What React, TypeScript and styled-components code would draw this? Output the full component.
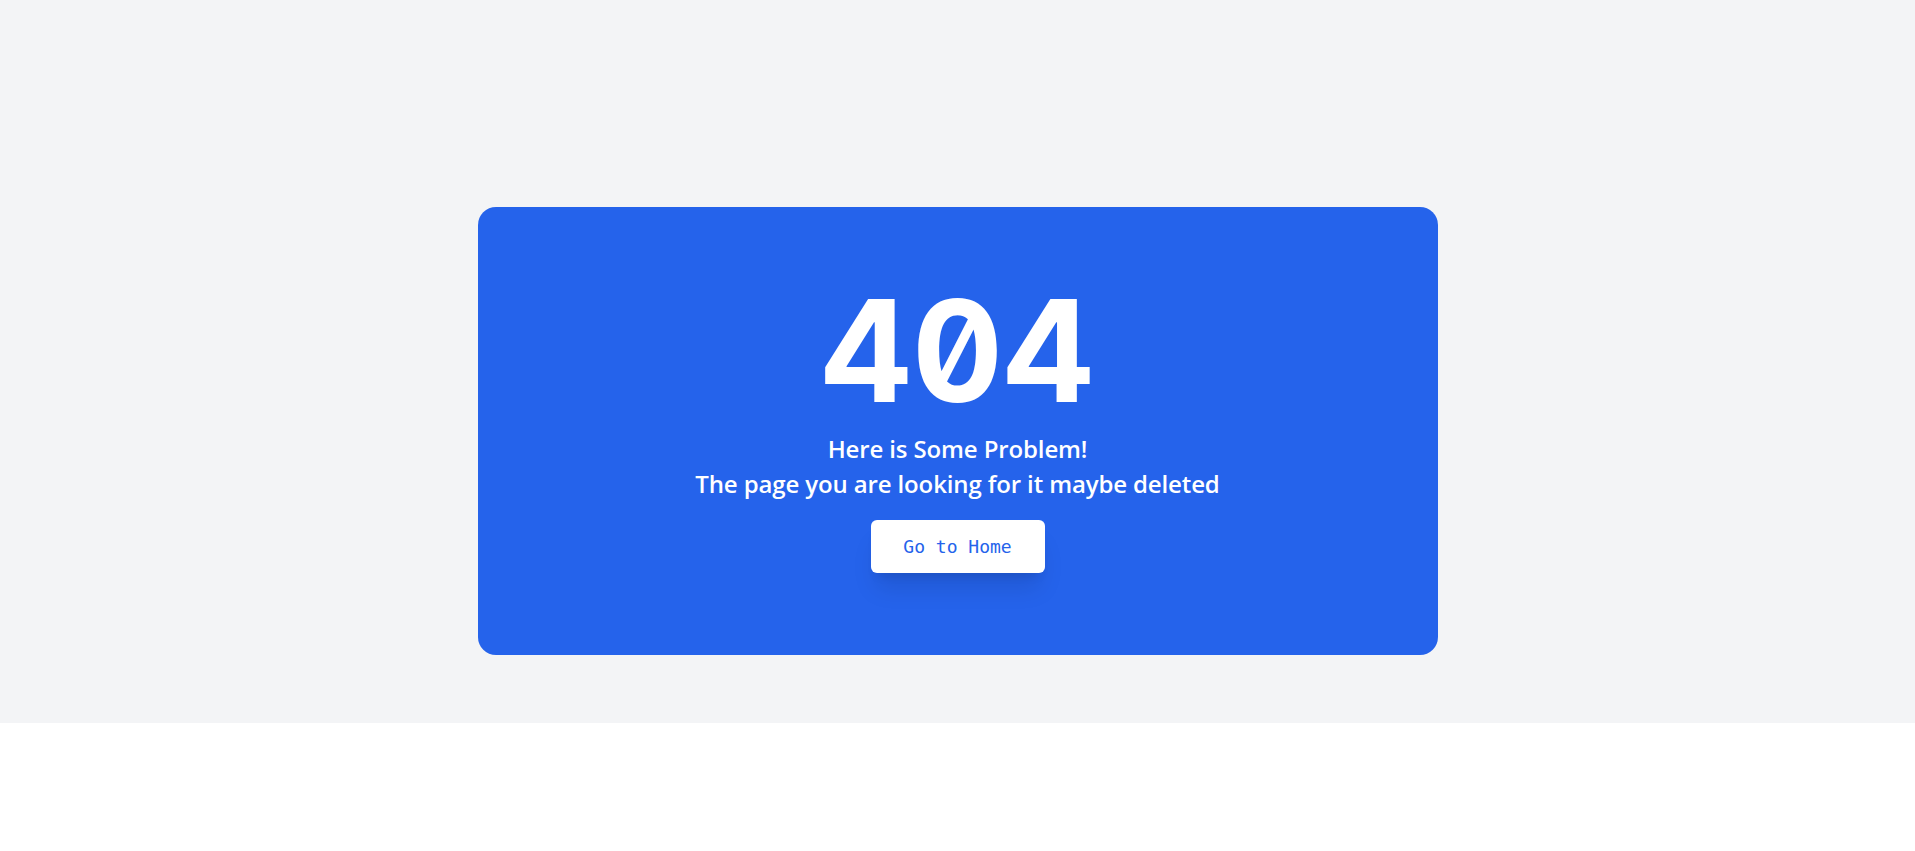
import React from 'react'
import styled, { createGlobalStyle } from 'styled-components'

const GlobalStyle = createGlobalStyle`
  html, body {
    margin: 0;
    padding: 0;
    background: #ffffff;
  }
  * {
    box-sizing: border-box;
  }
`

const Section = styled.section`
  height: 723px;
  background: #f3f4f6;
  padding-top: 207px;
`

const Card = styled.div`
  width: 960px;
  height: 448px;
  margin: 0 auto;
  background: #2563eb;
  border-radius: 18px;
  padding-top: 64px;
  display: flex;
  flex-direction: column;
  align-items: center;
`

const Code = styled.h1`
  margin: 0;
  font-family: Inter, 'DejaVu Sans', sans-serif;
  font-feature-settings: 'zero' 1, 'tnum' 1;
  font-weight: 700;
  font-size: 141px;
  line-height: 160px;
  color: #ffffff;
`

const Message = styled.p`
  margin: 0;
  font-family: 'Open Sans', 'Noto Sans', sans-serif;
  font-weight: 600;
  font-size: 24px;
  line-height: 35px;
  letter-spacing: -0.13px;
  color: #ffffff;
  text-align: center;
`

const HomeButton = styled.a`
  margin-top: 19px;
  width: 174px;
  height: 53px;
  display: flex;
  align-items: center;
  justify-content: center;
  background: #ffffff;
  border-radius: 6px;
  color: #2563eb;
  font-family: 'DejaVu Sans Mono', 'Liberation Mono', monospace;
  font-size: 18px;
  text-decoration: none;
  box-shadow: 0 20px 25px -5px rgba(0, 0, 0, 0.1), 0 8px 10px -6px rgba(0, 0, 0, 0.1);
  cursor: pointer;
`

const App = () => (
  <>
    <GlobalStyle />
    <Section>
      <Card>
        <Code>404</Code>
        <Message>
          Here is Some Problem!
          <br />
          The page you are looking for it maybe deleted
        </Message>
        <HomeButton href="#">Go to Home</HomeButton>
      </Card>
    </Section>
  </>
)

export default App
